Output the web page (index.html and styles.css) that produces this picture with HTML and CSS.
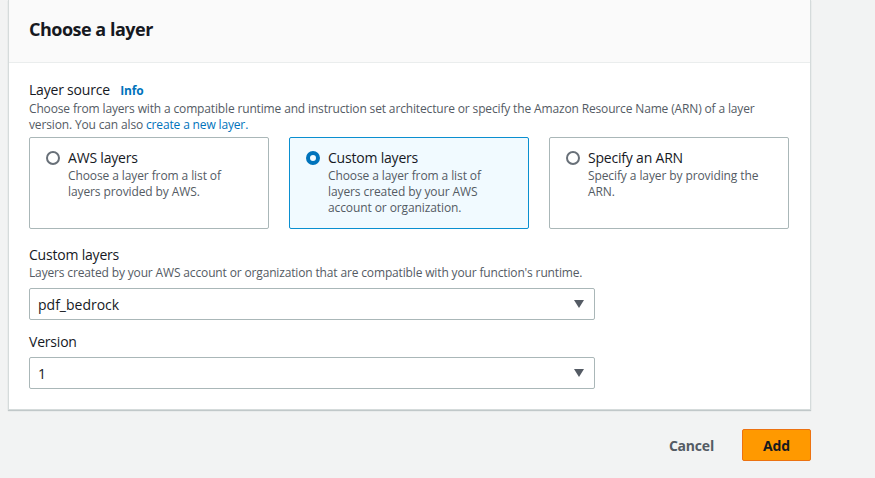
FILE: index.html
```html
<!DOCTYPE html>
<html>
<head>
<meta charset="utf-8">
<link rel="stylesheet" href="styles.css">
</head>
<body>
<div class="page">
  <div class="card">
    <div class="card-header"><h2 class="title">Choose a layer</h2></div>
    <div class="card-body">
      <div class="field field-source">
        <div class="label">Layer source <a class="info">Info</a></div>
        <p class="desc">Choose from layers with a compatible runtime and instruction set architecture or specify the Amazon Resource Name (ARN) of a layer version. You can also <a class="link">create a new layer.</a></p>
        <div class="tiles">
          <div class="tile">
            <span class="radio"></span>
            <div class="tile-text">
              <div class="tile-title">AWS layers</div>
              <div class="tile-desc">Choose a layer from a list of layers provided by AWS.</div>
            </div>
          </div>
          <div class="tile tile-selected">
            <span class="radio radio-on"></span>
            <div class="tile-text">
              <div class="tile-title">Custom layers</div>
              <div class="tile-desc">Choose a layer from a list of layers created by your AWS account or organization.</div>
            </div>
          </div>
          <div class="tile">
            <span class="radio"></span>
            <div class="tile-text">
              <div class="tile-title">Specify an ARN</div>
              <div class="tile-desc">Specify a layer by providing the ARN.</div>
            </div>
          </div>
        </div>
      </div>
      <div class="field field-layers">
        <div class="label">Custom layers</div>
        <p class="desc">Layers created by your AWS account or organization that are compatible with your function's runtime.</p>
        <div class="select"><span>pdf_bedrock</span><span class="caret"></span></div>
      </div>
      <div class="field field-version">
        <div class="label">Version</div>
        <div class="select"><span>1</span><span class="caret"></span></div>
      </div>
    </div>
  </div>
  <div class="actions">
    <button class="btn-link">Cancel</button>
    <button class="btn-primary">Add</button>
  </div>
</div>
</body>
</html>
```
FILE: styles.css
```css
* { box-sizing: border-box; }
html, body { margin: 0; padding: 0; }
body {
  background: #f2f3f3;
  font-family: "Open Sans", "Noto Sans", sans-serif;
  color: #16191f;
  width: 875px;
  height: 478px;
  overflow: hidden;
}
.page { padding-left: 8px; }
.card {
  width: 803px;
  background: #fff;
  border: 1px solid #d5dbdb;
  border-top: none;
  box-shadow: 0 1px 1px rgba(0,28,36,0.2);
}
.card-header {
  height: 63px;
  background: #fafafa;
  border-bottom: 1px solid #eaeded;
  padding: 17px 20px 0;
}
.title {
  margin: 0;
  font-size: 18px;
  line-height: 24px;
  font-weight: 700;
  letter-spacing: -0.5px;
}
.card-body { padding: 17px 20px 20px; }
.field-source { margin-bottom: 16px; }
.field-layers { margin-bottom: 12px; }
.label {
  font-size: 14px;
  line-height: 20px;
  letter-spacing: -0.2px;
}
.info {
  color: #0073bb;
  font-weight: 700;
  font-size: 12px;
  margin-left: 7px;
  letter-spacing: -0.2px;
}
.desc {
  margin: 0;
  font-size: 12px;
  line-height: 16px;
  color: #545b64;
  letter-spacing: -0.15px;
}
.link { color: #0073bb; }
.tiles {
  display: grid;
  grid-template-columns: repeat(3, 240px);
  column-gap: 20px;
  margin-top: 4px;
}
.tile {
  height: 92px;
  border: 1px solid #aab7b8;
  border-radius: 2px;
  padding: 10px 16px;
  display: flex;
  gap: 8px;
}
.tile-selected {
  background: #f1faff;
  border-color: #0a8fd0;
}
.radio {
  flex: none;
  width: 14px;
  height: 14px;
  border-radius: 50%;
  border: 2px solid #687078;
  margin-top: 3px;
}
.radio-on {
  border: 4px solid #0073bb;
}
.tile-title { font-size: 14px; line-height: 20px; letter-spacing: -0.2px; }
.tile-desc { font-size: 12px; line-height: 16px; color: #545b64; letter-spacing: -0.1px; }
.field-layers .select { margin-top: 7px; }
.field-version .select { margin-top: 5px; }
.select {
  width: 566px;
  height: 32px;
  border: 1px solid #aab7b8;
  border-radius: 2px;
  display: flex;
  align-items: center;
  justify-content: space-between;
  padding: 0 10px 0 8px;
  font-size: 14px;
}
.caret {
  width: 0; height: 0;
  border-left: 5px solid transparent;
  border-right: 5px solid transparent;
  border-top: 8px solid #545b64;
}
.actions {
  width: 803px;
  display: flex;
  justify-content: flex-end;
  align-items: center;
  gap: 20px;
  padding-top: 19px;
}
.btn-link, .btn-primary {
  font-family: inherit;
  font-size: 14px;
  font-weight: 700;
  border: none;
  background: none;
  cursor: pointer;
  letter-spacing: -0.2px;
}
.btn-link { color: #545b64; padding: 4px 8px; }
.btn-primary {
  background: #ff9900;
  color: #16191f;
  width: 69px;
  height: 32px;
  border: 1px solid #ec7211;
  border-radius: 2px;
}
```
